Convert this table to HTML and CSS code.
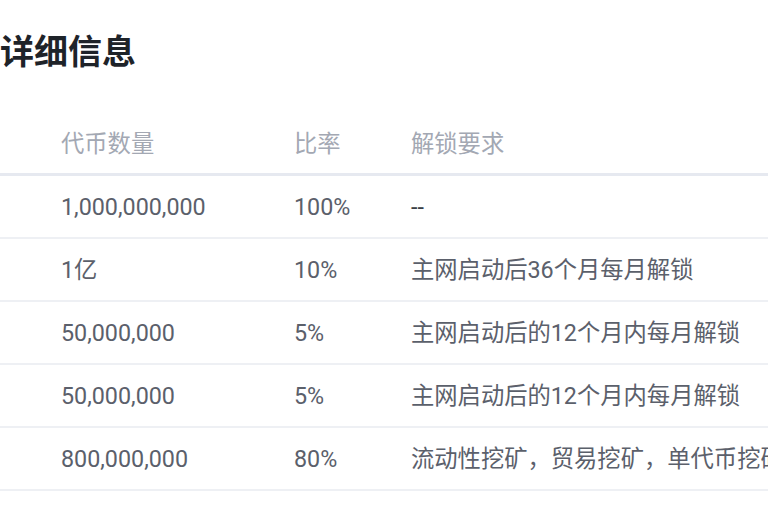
FILE: index.html
```html
<!DOCTYPE html>
<html lang="zh-CN">
<head>
<meta charset="utf-8">
<link rel="stylesheet" href="styles.css">
</head>
<body>
<div class="page">
  <h2 class="title">详细信息</h2>
  <div class="table">
    <div class="row head">
      <div class="cell">代币数量</div>
      <div class="cell">比率</div>
      <div class="cell">解锁要求</div>
    </div>
    <div class="row">
      <div class="cell">1,000,000,000</div>
      <div class="cell">100%</div>
      <div class="cell dash">--</div>
    </div>
    <div class="row">
      <div class="cell">1亿</div>
      <div class="cell">10%</div>
      <div class="cell">主网启动后36个月每月解锁</div>
    </div>
    <div class="row">
      <div class="cell">50,000,000</div>
      <div class="cell">5%</div>
      <div class="cell">主网启动后的12个月内每月解锁</div>
    </div>
    <div class="row">
      <div class="cell">50,000,000</div>
      <div class="cell">5%</div>
      <div class="cell">主网启动后的12个月内每月解锁</div>
    </div>
    <div class="row">
      <div class="cell">800,000,000</div>
      <div class="cell">80%</div>
      <div class="cell">流动性挖矿，贸易挖矿，单代币挖矿</div>
    </div>
  </div>
</div>
</body>
</html>
```

FILE: styles.css
```css
html, body {
  margin: 0;
  padding: 0;
  background: #ffffff;
  overflow: hidden;
}
.page {
  width: 768px;
  height: 510px;
  overflow: hidden;
  font-family: Roboto, "Noto Sans CJK SC", sans-serif;
}
.title {
  margin: 0;
  padding: 27px 0 0 0;
  height: 49px;
  font-size: 34px;
  line-height: 46px;
  font-weight: 700;
  color: #1e2329;
  font-family: "Noto Sans CJK SC", sans-serif;
}
.table {
  margin-top: 39px;
}
.row {
  display: grid;
  grid-template-columns: 233px 117px 1fr;
  padding-left: 61px;
  height: 61px;
  align-items: center;
  border-bottom: 2px solid #eef0f4;
  font-size: 23.3px;
  line-height: 32px;
  color: #5b606b;
  white-space: nowrap;
}
.row.head {
  height: 58px;
  border-bottom: 3px solid #e6e9f0;
  color: #a3a8b3;
}
.cell {
  height: 32px;
}
.dash {
  color: #3a3f48;
}
```
